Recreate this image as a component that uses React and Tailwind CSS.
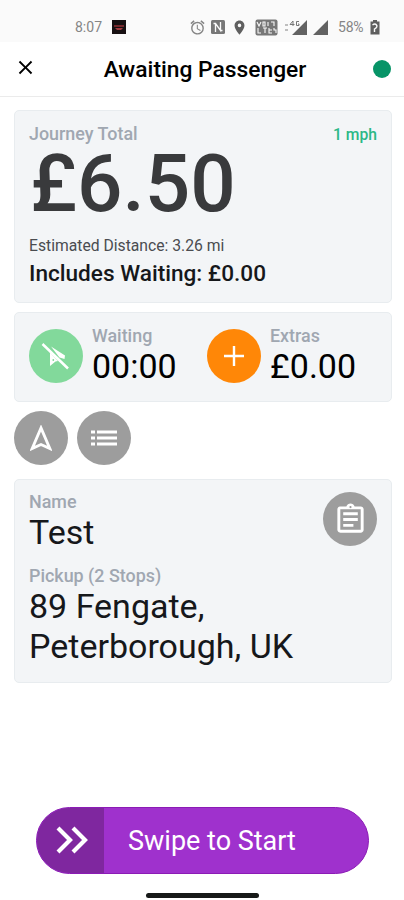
import React from 'react';
import { MdAlarm, MdLocationOn, MdClose, MdOutlineAssignment } from 'react-icons/md';

function StatusBar() {
    return (
        <div className="h-[42px] bg-[#fafafa] pt-[12px] pl-[75px] flex items-center text-[#858585]">
            <span className="w-[28px] text-[14px] leading-none whitespace-nowrap">8:07</span>
            <svg className="ml-[9px] shrink-0" width="14" height="14" viewBox="0 0 14 14">
                <rect width="14" height="14" fill="#171012" />
                <path d="M2 5h10v2H2z" fill="#75282c" />
                <path d="M3 8h8l-2 2H5z" fill="#a33b40" />
            </svg>
            <MdAlarm className="ml-[63px] shrink-0" size={17} />
            {/* NFC */}
            <svg className="ml-[5px] shrink-0" width="14" height="14" viewBox="0 0 14 14">
                <rect width="14" height="14" rx="1.500" fill="#777777" />
                <path d="M4.500 12V3.500H2.500M4.500 3.500L9.500 10.500V2M9.500 10.500h2" stroke="#fafafa" strokeWidth="1.300" fill="none" />
            </svg>
            <MdLocationOn className="ml-[6px] shrink-0 text-[#5f5f5f]" size={17} />
            {/* VoLTE */}
            <svg className="ml-[7px] shrink-0" width="23" height="17" viewBox="0 0 23 17">
                <rect x="0.5" y="0.5" width="22" height="16" rx="2" fill="#777777" />
                <path d="M2 3l2 4 2-4M8 3v4h2V3zM13 3v4M16 3h3v4M3 9v5h3M8 9h4M10 9v5M14 9v5h3M14 11h3M19 9v2h2v3" stroke="#fafafa" strokeWidth="1.1" fill="none" />
            </svg>
            <svg className="ml-[7px] shrink-0" width="44" height="17" viewBox="0 0 44 17">
                <path d="M0 6h3M0 11h3" stroke="#aaaaaa" strokeWidth="1.5" />
                <path d="M7 16L22 1v15zM28 16L43 1v15z" fill="#626262" />
                <path d="M5 5.500h4.500M8 2v5M8 2L5 5.500M14 2.500h-2.500v4H14V5h-1" stroke="#777777" strokeWidth="1" fill="none" />
            </svg>
            <span className="ml-[9px] w-[28px] text-[14px] leading-none tracking-[-0.2px] whitespace-nowrap">58%</span>
            <svg className="ml-[3px] shrink-0" width="12" height="15" viewBox="0 0 12 15">
                <path d="M4 0h4v1.500h2.500v13h-9v-13H4z" fill="#5f5f5f" />
                <path d="M3.500 5q2.500-2 4 0t-2 4V12" stroke="#fafafa" strokeWidth="1.400" fill="none" />
            </svg>
        </div>
    );
}

function Card({ className, children }) {
    return (
        <section className={`rounded-[5px] border border-[#e8ecef] bg-[#f3f5f7] px-[14px] ${className}`}>
            {children}
        </section>
    );
}

function RoundButton({ color = 'bg-[#9d9d9d]', label, children }) {
    return (
        <button aria-label={label} className={`size-[54px] shrink-0 rounded-full flex items-center justify-center text-white ${color}`}>
            {children}
        </button>
    );
}

function Label({ children }) {
    return <div className="h-5 text-[17.9px] leading-5 font-medium text-[#a0a7b1] whitespace-nowrap">{children}</div>;
}

export default function App() {
    return (
        <div className="w-[404px] h-[900px] overflow-hidden bg-white text-[#16181b] font-['Roboto',sans-serif] flex flex-col">
            <StatusBar />

            <header className="h-[55px] shrink-0 border-b border-[#ebebeb] flex items-center pl-[14px] pr-[13px] text-black">
                <MdClose className="relative -top-[2px]" size={23} />
                <h1 className="flex-1 text-center text-[22.8px] leading-[53px] font-medium whitespace-nowrap">Awaiting Passenger</h1>
                <span className="size-[18px] rounded-full bg-[#079467]"></span>
            </header>

            <main className="pt-[13px] pl-[14px] pr-[12px]">
                <Card className="h-[193px] pt-[13px]">
                    <div className="flex justify-between">
                        <Label>Journey Total</Label>
                        <span className="text-[15.7px] leading-[22px] font-medium text-[#2bb886]">1 mph</span>
                    </div>
                    <div className="h-[77px] pl-px text-[80px] leading-[77px] font-medium text-[#393a3c]">£6.50</div>
                    <div className="mt-3 text-[15.7px] leading-[22px] text-[#4a4c50]">Estimated Distance: 3.26 mi</div>
                    <div className="mt-[4px] text-[22.6px] leading-[25px] font-medium">Includes Waiting: £0.00</div>
                </Card>

                <Card className="mt-[9px] h-[90px] flex pt-[13px] text-black">
                    <div className="flex w-[178px]">
                        <div className="pt-[3px]">
                            <RoundButton label="Waiting" color="bg-[#82d99b]">
                                <svg width="30" height="30" viewBox="0 0 30 30">
                                    <path d="M10 5.500L24 14.500l-.5 3.500-5-1.500zM9 11.500l8 8.500-2.500.5L9 25z" fill="currentColor" />
                                    <path d="M1.500 3L27 27.500" stroke="currentColor" strokeWidth="2.500" />
                                    <circle cx="12.300" cy="19" r="0.900" fill="#82d99b" />
                                </svg>
                            </RoundButton>
                        </div>
                        <div className="ml-[9px]">
                            <Label>Waiting</Label>
                            <div className="text-[34px] leading-10">00:00</div>
                        </div>
                    </div>
                    <div className="flex">
                        <div className="pt-[3px]">
                            <RoundButton label="Extras" color="bg-[#ff8707]">
                                <svg width="20" height="20" viewBox="0 0 20 20">
                                    <path d="M10 0v20M0 10h20" stroke="currentColor" strokeWidth="2.400" />
                                </svg>
                            </RoundButton>
                        </div>
                        <div className="ml-[9px]">
                            <Label>Extras</Label>
                            <div className="text-[34px] leading-10">£0.00</div>
                        </div>
                    </div>
                </Card>

                <div className="mt-[9px] flex gap-[9px]">
                    <RoundButton label="Navigate">
                        <svg width="22" height="26" viewBox="0 0 22 26">
                            <path d="M11 3L2.200 23.500 11 19.500l8.800 4z" stroke="currentColor" strokeWidth="2.900" fill="none" />
                        </svg>
                    </RoundButton>
                    <RoundButton label="Stops">
                        <svg width="26" height="16" viewBox="0 0 26 16">
                            <path d="M0 2h4M6 2h20M0 8h4M6 8h20M0 14h4M6 14h20" stroke="currentColor" strokeWidth="3" />
                        </svg>
                    </RoundButton>
                </div>

                <Card className="mt-[14px] h-[204px] flex justify-between pt-[12px]">
                    <div>
                        <Label>Name</Label>
                        <div className="text-[34px] leading-10">Test</div>
                        <div className="mt-[14px]">
                            <Label>Pickup (2 Stops)</Label>
                        </div>
                        <div className="w-[280px] text-[34px] leading-10">89 Fengate, Peterborough, UK</div>
                    </div>
                    <RoundButton label="Notes">
                        <MdOutlineAssignment size={35} />
                    </RoundButton>
                </Card>
            </main>

            <footer className="mt-auto pb-[2px] flex flex-col items-center">
                <button className="w-[333px] h-[67px] ml-px rounded-full overflow-hidden border border-[#8b1bb5] bg-[#9f31cd] text-white flex items-center">
                    <span className="w-[67px] h-full bg-[#7f279f] flex items-center justify-center">
                        <svg className="ml-[3px] -mt-[2px]" width="33" height="28" viewBox="0 0 33 28">
                            <path d="M2 2l12 12L2 26M17 2l12 12-12 12" stroke="currentColor" strokeWidth="4.200" fill="none" />
                        </svg>
                    </span>
                    <span className="ml-[24px] pt-px text-[27px] leading-none whitespace-nowrap">Swipe to Start</span>
                </button>
                <div className="mt-[19px] w-[113px] h-[5px] rounded-full bg-[#171918]"></div>
            </footer>
        </div>
    );
}
